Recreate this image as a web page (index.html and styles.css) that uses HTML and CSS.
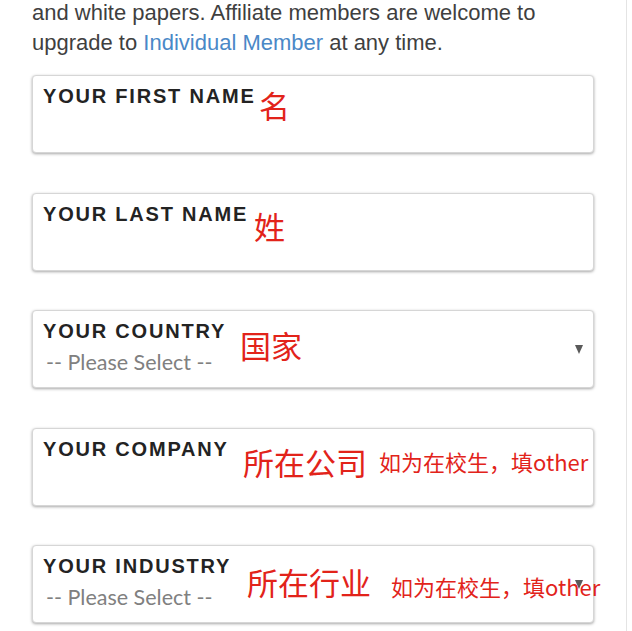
FILE: index.html
```html
<!DOCTYPE html>
<html lang="en">
<head>
<meta charset="utf-8">
<title>Membership form</title>
<link rel="stylesheet" href="styles.css">
</head>
<body>
<div class="page">
  <p class="intro">and white papers. Affiliate members are welcome to<br>upgrade to <a href="#" class="link">Individual Member</a> at any time.</p>
  <div class="fields">
    <div class="field">
      <div class="field-body">
        <div class="label">YOUR FIRST NAME</div>
      </div>
      <span class="note big n1">名</span>
    </div>
    <div class="field">
      <div class="field-body">
        <div class="label">YOUR LAST NAME</div>
      </div>
      <span class="note big n2">姓</span>
    </div>
    <div class="field select">
      <div class="field-body">
        <div class="label">YOUR COUNTRY</div>
        <div class="placeholder">-- Please Select --</div>
      </div>
      <span class="caret"></span>
      <span class="note big n3">国家</span>
    </div>
    <div class="field">
      <div class="field-body">
        <div class="label">YOUR COMPANY</div>
      </div>
      <span class="note big n4">所在公司</span>
      <span class="note small n4s">如为在校生，填other</span>
    </div>
    <div class="field select">
      <div class="field-body">
        <div class="label">YOUR INDUSTRY</div>
        <div class="placeholder">-- Please Select --</div>
      </div>
      <span class="caret"></span>
      <span class="note big n5">所在行业</span>
      <span class="note small n5s">如为在校生，填other</span>
    </div>
  </div>
</div>
</body>
</html>
```

FILE: styles.css
```css
html, body {
  margin: 0;
  padding: 0;
  background: #ffffff;
}

body {
  font-family: "Liberation Sans", Arial, sans-serif;
  overflow: hidden;
}

.page {
  width: 627px;
  height: 631px;
  border-right: 1px solid #e4e4e4;
  padding-left: 32px;
  box-sizing: border-box;
  overflow: hidden;
}

.intro {
  margin: -2px 0 0 0;
  font-size: 22px;
  line-height: 30px;
  color: #3f3f3f;
  white-space: nowrap;
}

.link {
  color: #4a88c7;
  text-decoration: none;
}

.fields {
  margin-top: 17px;
  display: flex;
  flex-direction: column;
  gap: 39.5px;
}

.field {
  position: relative;
  width: 562px;
  height: 78px;
  box-sizing: border-box;
  border: 1px solid #d6d6d6;
  border-radius: 4px;
  background: #ffffff;
  box-shadow: 0 1px 3px rgba(0, 0, 0, 0.35);
  display: flex;
  align-items: flex-start;
}

.field-body {
  padding: 11px 0 0 10px;
  display: flex;
  flex-direction: column;
}

.label {
  font-family: "Liberation Sans", Arial, sans-serif;
  font-weight: bold;
  font-size: 20px;
  line-height: 19px;
  letter-spacing: 1.8px;
  color: #232323;
}

.placeholder {
  margin-top: 10px;
  margin-left: 3px;
  font-family: Lato, "Liberation Sans", sans-serif;
  font-size: 21.5px;
  line-height: 22px;
  color: #808080;
}

.caret {
  position: relative;
  z-index: 1;
  margin-left: auto;
  margin-right: 10px;
  align-self: center;
  width: 0;
  height: 0;
  border-left: 4.5px solid transparent;
  border-right: 4.5px solid transparent;
  border-top: 9px solid #5a5a5a;
}

.note {
  position: absolute;
  font-family: "Noto Sans CJK SC", "Noto Sans", sans-serif;
  color: #e2231a;
  line-height: 1;
  white-space: nowrap;
}

.note.big {
  font-size: 31px;
}

.note.small {
  font-size: 22px;
}

.n1 { left: 226px; top: 13px; font-size: 30px; }
.n2 { left: 221px; top: 16px; }
.n3 { left: 207px; top: 18px; }
.n4 { left: 210px; top: 17px; font-size: 30px; }
.n4s { left: 346px; top: 21px; }
.n5 { left: 214px; top: 20px; }
.n5s { left: 358px; top: 29px; }
```
